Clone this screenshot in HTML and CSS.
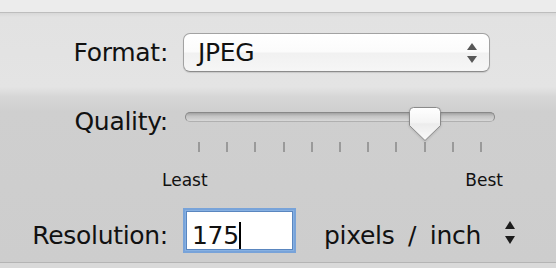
FILE: index.html
```html
<!DOCTYPE html>
<html lang="en">
<head>
    <meta charset="UTF-8">
    <title>Export Options</title>
    <link rel="stylesheet" href="styles.css">
</head>
<body>
    <div class="top-strip"></div>

    <div class="panel">
        <div class="row row-format">
            <span class="field-label">Format:</span>
            <div class="popup">
                <span class="popup-value">JPEG</span>
                <svg class="popup-arrows" width="10" height="20" viewBox="0 0 10 20">
                    <path d="M5 0 L10 7 L0 7 Z"/>
                    <path d="M0 13 L10 13 L5 20 Z"/>
                </svg>
            </div>
        </div>

        <div class="row row-quality">
            <span class="field-label">Quality:</span>
            <div class="slider" style="--value: 0.8">
                <div class="slider-track"></div>
                <div class="slider-ticks">
                    <span></span><span></span><span></span><span></span><span></span><span></span>
                    <span></span><span></span><span></span><span></span><span></span>
                </div>
                <svg class="slider-thumb" width="32" height="35" viewBox="0 0 32 35">
                    <defs>
                        <linearGradient id="thumb-fill" x1="0" y1="0" x2="0" y2="1">
                            <stop offset="0" stop-color="#ffffff"/>
                            <stop offset="0.45" stop-color="#f4f4f4"/>
                            <stop offset="0.5" stop-color="#ececec"/>
                            <stop offset="1" stop-color="#fafafa"/>
                        </linearGradient>
                    </defs>
                    <path d="M4.5 0.5 H27.5 Q31.5 0.5 31.5 4.5 V18.5 L16 33.5 L0.5 18.5 V4.5 Q0.5 0.5 4.5 0.5 Z"
                          fill="url(#thumb-fill)" stroke="#8a8a8a" stroke-width="1"/>
                </svg>
            </div>
        </div>

        <div class="row row-scale">
            <span></span>
            <div class="scale-labels">
                <span>Least</span>
                <span>Best</span>
            </div>
        </div>

        <div class="row row-resolution">
            <span class="field-label">Resolution:</span>
            <div class="resolution-controls">
                <div class="text-field"><span class="text-value">175</span><span class="caret"></span></div>
                <span class="unit">pixels / inch</span>
                <svg class="stepper" width="10" height="23" viewBox="0 0 10 23">
                    <path d="M5 0 L10 8 L0 8 Z"/>
                    <path d="M0 15 L10 15 L5 23 Z"/>
                </svg>
            </div>
        </div>
    </div>

    <div class="bottom-strip"></div>
</body>
</html>
```

FILE: styles.css
```css
body, html {
    margin: 0;
    padding: 0;
    height: 100%;
    overflow: hidden;
    font-family: 'DejaVu Sans', Verdana, sans-serif;
    color: #111;
    background-color: #cdcdcd;
}

.top-strip {
    height: 12px;
    background-color: #ececec;
    border-bottom: 1px solid #bdbdbd;
}

.panel {
    height: 249px;
    box-sizing: border-box;
    padding-top: 20px;
    background: linear-gradient(to bottom,
        #d8d8d8 0,
        #e2e2e2 4px,
        #e4e4e4 74px,
        #d6d6d6 84px,
        #cfcfcf 98px,
        #cdcdcd 249px);
}

.bottom-strip {
    height: 5px;
    border-top: 1px solid #b4b4b4;
    background-color: #d9d9d9;
}

/* Form rows: right-aligned label column + control column */
.row {
    display: grid;
    grid-template-columns: 168px 1fr;
    column-gap: 15px;
}

.field-label {
    text-align: right;
    font-size: 25px;
    line-height: 28px;
    letter-spacing: -0.3px;
}

.row-format {
    align-items: center;
}

.row-quality {
    margin-top: 35px;
    align-items: start;
}

.row-quality .field-label {
    margin-top: 1px;
}

.row-scale {
    margin-top: 18px;
}

.row-resolution {
    margin-top: 21px;
    align-items: baseline;
}

/* Popup button */
.popup {
    width: 307px;
    height: 39px;
    box-sizing: border-box;
    display: flex;
    align-items: center;
    justify-content: space-between;
    padding: 0 12px 0 14px;
    border: 1px solid #a2a2a2;
    border-bottom-color: #8c8c8c;
    border-radius: 7px;
    background: linear-gradient(to bottom, #ffffff 0, #fbfbfb 48%, #f1f1f1 52%, #f6f6f6 100%);
    box-shadow: 0 1px 1px rgba(0, 0, 0, 0.12);
}

.popup-value {
    font-size: 25px;
    line-height: 28px;
    letter-spacing: -0.3px;
}

.popup-arrows {
    fill: #575757;
}

/* Slider */
.slider {
    position: relative;
    width: 310px;
    margin-left: 2px;
    padding-top: 5px;
}

.slider-track {
    height: 10px;
    box-sizing: border-box;
    border: 1px solid #888;
    border-bottom-color: #b0b0b0;
    border-radius: 5px;
    background: linear-gradient(to bottom, #a2a2a2 0, #c4c4c4 40%, #d8d8d8 100%);
}

.slider-ticks {
    display: flex;
    justify-content: space-between;
    margin-top: 20px;
    padding: 0 13px 0 13px;
}

.slider-ticks span {
    width: 2px;
    height: 10px;
    background-color: #9a9a9a;
}

.slider-thumb {
    position: absolute;
    top: 0;
    left: calc(14px + var(--value) * 282px - 16px);
    filter: drop-shadow(0 1px 1px rgba(0, 0, 0, 0.15));
}

/* Least / Best */
.scale-labels {
    display: flex;
    justify-content: space-between;
    margin-left: -21px;
    width: 341px;
    font-size: 17px;
    line-height: 20px;
}

/* Resolution */
.resolution-controls {
    display: flex;
    align-items: baseline;
    width: 332px;
}

.text-field {
    width: 107px;
    height: 39px;
    box-sizing: border-box;
    margin-left: 3px;
    padding: 10px 0 0 5px;
    border: 1px solid #5a86bf;
    background-color: #fff;
    box-shadow: 0 0 0 1px #86b0e2, 0 0 0 3px rgba(104, 155, 218, 0.85);
    font-size: 25px;
    line-height: 27px;
    letter-spacing: -0.3px;
    white-space: nowrap;
}

.caret {
    display: inline-block;
    width: 2px;
    height: 27px;
    vertical-align: top;
    background-color: #000;
}

.unit {
    margin-left: 31px;
    font-size: 25px;
    line-height: 28px;
    letter-spacing: -0.3px;
    word-spacing: 6px;
}

.stepper {
    margin-left: auto;
    fill: #1c1c1c;
}
```
